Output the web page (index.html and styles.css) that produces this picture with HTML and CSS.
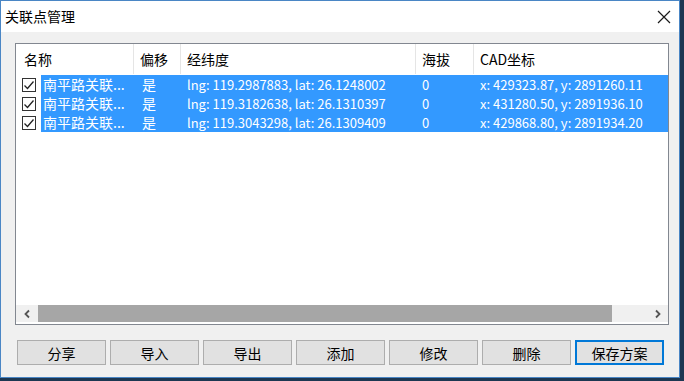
FILE: index.html
```html
<!DOCTYPE html>
<html lang="zh-CN">
<head>
<meta charset="utf-8">
<title>关联点管理</title>
<link rel="stylesheet" href="styles.css">
</head>
<body>
<div class="window">
  <div class="titlebar">
    <span class="title">关联点管理</span>
    <svg class="close" width="14" height="14" viewBox="0 0 14 14"><path d="M1 1L13 13M13 1L1 13" stroke="#1a1a1a" stroke-width="1.2" fill="none"/></svg>
  </div>
  <div class="body">
    <div class="listbox">
      <div class="row header">
        <div class="c c1">名称</div>
        <div class="c c2">偏移</div>
        <div class="c c3">经纬度</div>
        <div class="c c4">海拔</div>
        <div class="c c5">CAD坐标</div>
      </div>
      <div class="row item">
        <div class="c c1"><span class="cb"><svg width="12" height="12" viewBox="0 0 12 12"><path d="M1.5 6.5L4.5 9.5L10.5 2.5" stroke="#222" stroke-width="1.3" fill="none"/></svg></span><span class="name">南平路关联...</span></div>
        <div class="c c2 sel">是</div>
        <div class="c c3 sel">lng: 119.2987883, lat: 26.1248002</div>
        <div class="c c4 sel">0</div>
        <div class="c c5 sel">x: 429323.87, y: 2891260.11</div>
      </div>
      <div class="row item">
        <div class="c c1"><span class="cb"><svg width="12" height="12" viewBox="0 0 12 12"><path d="M1.5 6.5L4.5 9.5L10.5 2.5" stroke="#222" stroke-width="1.3" fill="none"/></svg></span><span class="name">南平路关联...</span></div>
        <div class="c c2 sel">是</div>
        <div class="c c3 sel">lng: 119.3182638, lat: 26.1310397</div>
        <div class="c c4 sel">0</div>
        <div class="c c5 sel">x: 431280.50, y: 2891936.10</div>
      </div>
      <div class="row item">
        <div class="c c1"><span class="cb"><svg width="12" height="12" viewBox="0 0 12 12"><path d="M1.5 6.5L4.5 9.5L10.5 2.5" stroke="#222" stroke-width="1.3" fill="none"/></svg></span><span class="name">南平路关联...</span></div>
        <div class="c c2 sel">是</div>
        <div class="c c3 sel">lng: 119.3043298, lat: 26.1309409</div>
        <div class="c c4 sel">0</div>
        <div class="c c5 sel">x: 429868.80, y: 2891934.20</div>
      </div>
      <div class="fill"></div>
      <div class="hscroll">
        <div class="arrow left"><svg width="8" height="10" viewBox="0 0 8 10"><path d="M6 1.5L2.5 5L6 8.5" stroke="#555" stroke-width="1.8" fill="none"/></svg></div>
        <div class="track"><div class="thumb"></div></div>
        <div class="arrow right"><svg width="8" height="10" viewBox="0 0 8 10"><path d="M2 1.5L5.5 5L2 8.5" stroke="#555" stroke-width="1.8" fill="none"/></svg></div>
      </div>
    </div>
    <div class="buttons">
      <button class="btn">分享</button>
      <button class="btn">导入</button>
      <button class="btn">导出</button>
      <button class="btn">添加</button>
      <button class="btn">修改</button>
      <button class="btn">删除</button>
      <button class="btn default">保存方案</button>
    </div>
  </div>
</div>
</body>
</html>
```
FILE: styles.css
```css
html, body {
  margin: 0;
  padding: 0;
}
body {
  width: 684px;
  height: 381px;
  background: #1d3752;
  font-family: "Noto Sans CJK SC", "Noto Sans", sans-serif;
  font-size: 14px;
  color: #000;
  overflow: hidden;
}
.window {
  width: 678px;
  height: 376px;
  border: 1px solid #4a86c5;
  background: #f0f0f0;
  display: flex;
  flex-direction: column;
}
.titlebar {
  height: 31px;
  background: #fff;
  display: flex;
  align-items: center;
  justify-content: space-between;
  padding: 0 8px 0 4px;
}
.title {
  font-size: 14px;
  line-height: 31px;
  color: #000;
}
.close {
  margin-top: 1px;
}
.body {
  flex: 1;
  display: flex;
  flex-direction: column;
  padding: 11px 10px 11px 14px;
}
.listbox {
  height: 280px;
  border: 1px solid #828790;
  background: #fff;
  display: flex;
  flex-direction: column;
}
.row {
  display: flex;
}
.header {
  height: 30px;
  align-items: stretch;
  margin-bottom: 1px;
}
.header .c {
  line-height: 30px;
  border-right: 1px solid #e5e5e5;
  padding-left: 6px;
}
.header .c1 { padding-left: 8px; }
.header .c5 { border-right: none; }
.c {
  box-sizing: border-box;
  white-space: nowrap;
  overflow: hidden;
}
.c1 { width: 118px; }
.c2 { width: 47px; }
.c3 { width: 235px; }
.c4 { width: 58px; }
.c5 { flex: 1; }
.item {
  height: 19px;
  line-height: 19px;
  font-size: 13px;
}
.item .c { padding-left: 6px; }
.item .c2 { padding-left: 8px; font-size: 14px; }
.item .c1 {
  display: flex;
  align-items: center;
  padding-left: 6px;
}
.sel {
  background: #3399ff;
  color: #fff;
}
.cb {
  width: 12px;
  height: 12px;
  border: 1px solid #333;
  background: #fff;
  display: flex;
  align-items: center;
  justify-content: center;
  flex: none;
}
.name {
  margin-left: 5px;
  flex: 1;
  height: 19px;
  background: #3399ff;
  color: #fff;
  padding-left: 2px;
  font-size: 14px;
}
.fill { flex: 1; }
.hscroll {
  height: 17px;
  margin-bottom: 2px;
  display: flex;
  background: #f0f0f0;
}
.arrow {
  width: 21px;
  display: flex;
  align-items: center;
  justify-content: center;
}
.arrow.right { width: 20px; }
.track {
  flex: 1;
  padding-left: 1px;
  display: flex;
}
.thumb {
  width: 574px;
  background: #a6a6a6;
}
.buttons {
  margin-top: 15px;
  display: grid;
  grid-template-columns: repeat(7, 89px);
  gap: 4px;
  padding-left: 2px;
}
.btn {
  height: 25px;
  box-sizing: border-box;
  border: 1px solid #adadad;
  background: #e1e1e1;
  font-family: "Noto Sans CJK SC", sans-serif;
  font-size: 14px;
  color: #000;
  padding: 0;
  line-height: 22px;
}
.btn.default {
  border: 2px solid #0078d7;
}
```
